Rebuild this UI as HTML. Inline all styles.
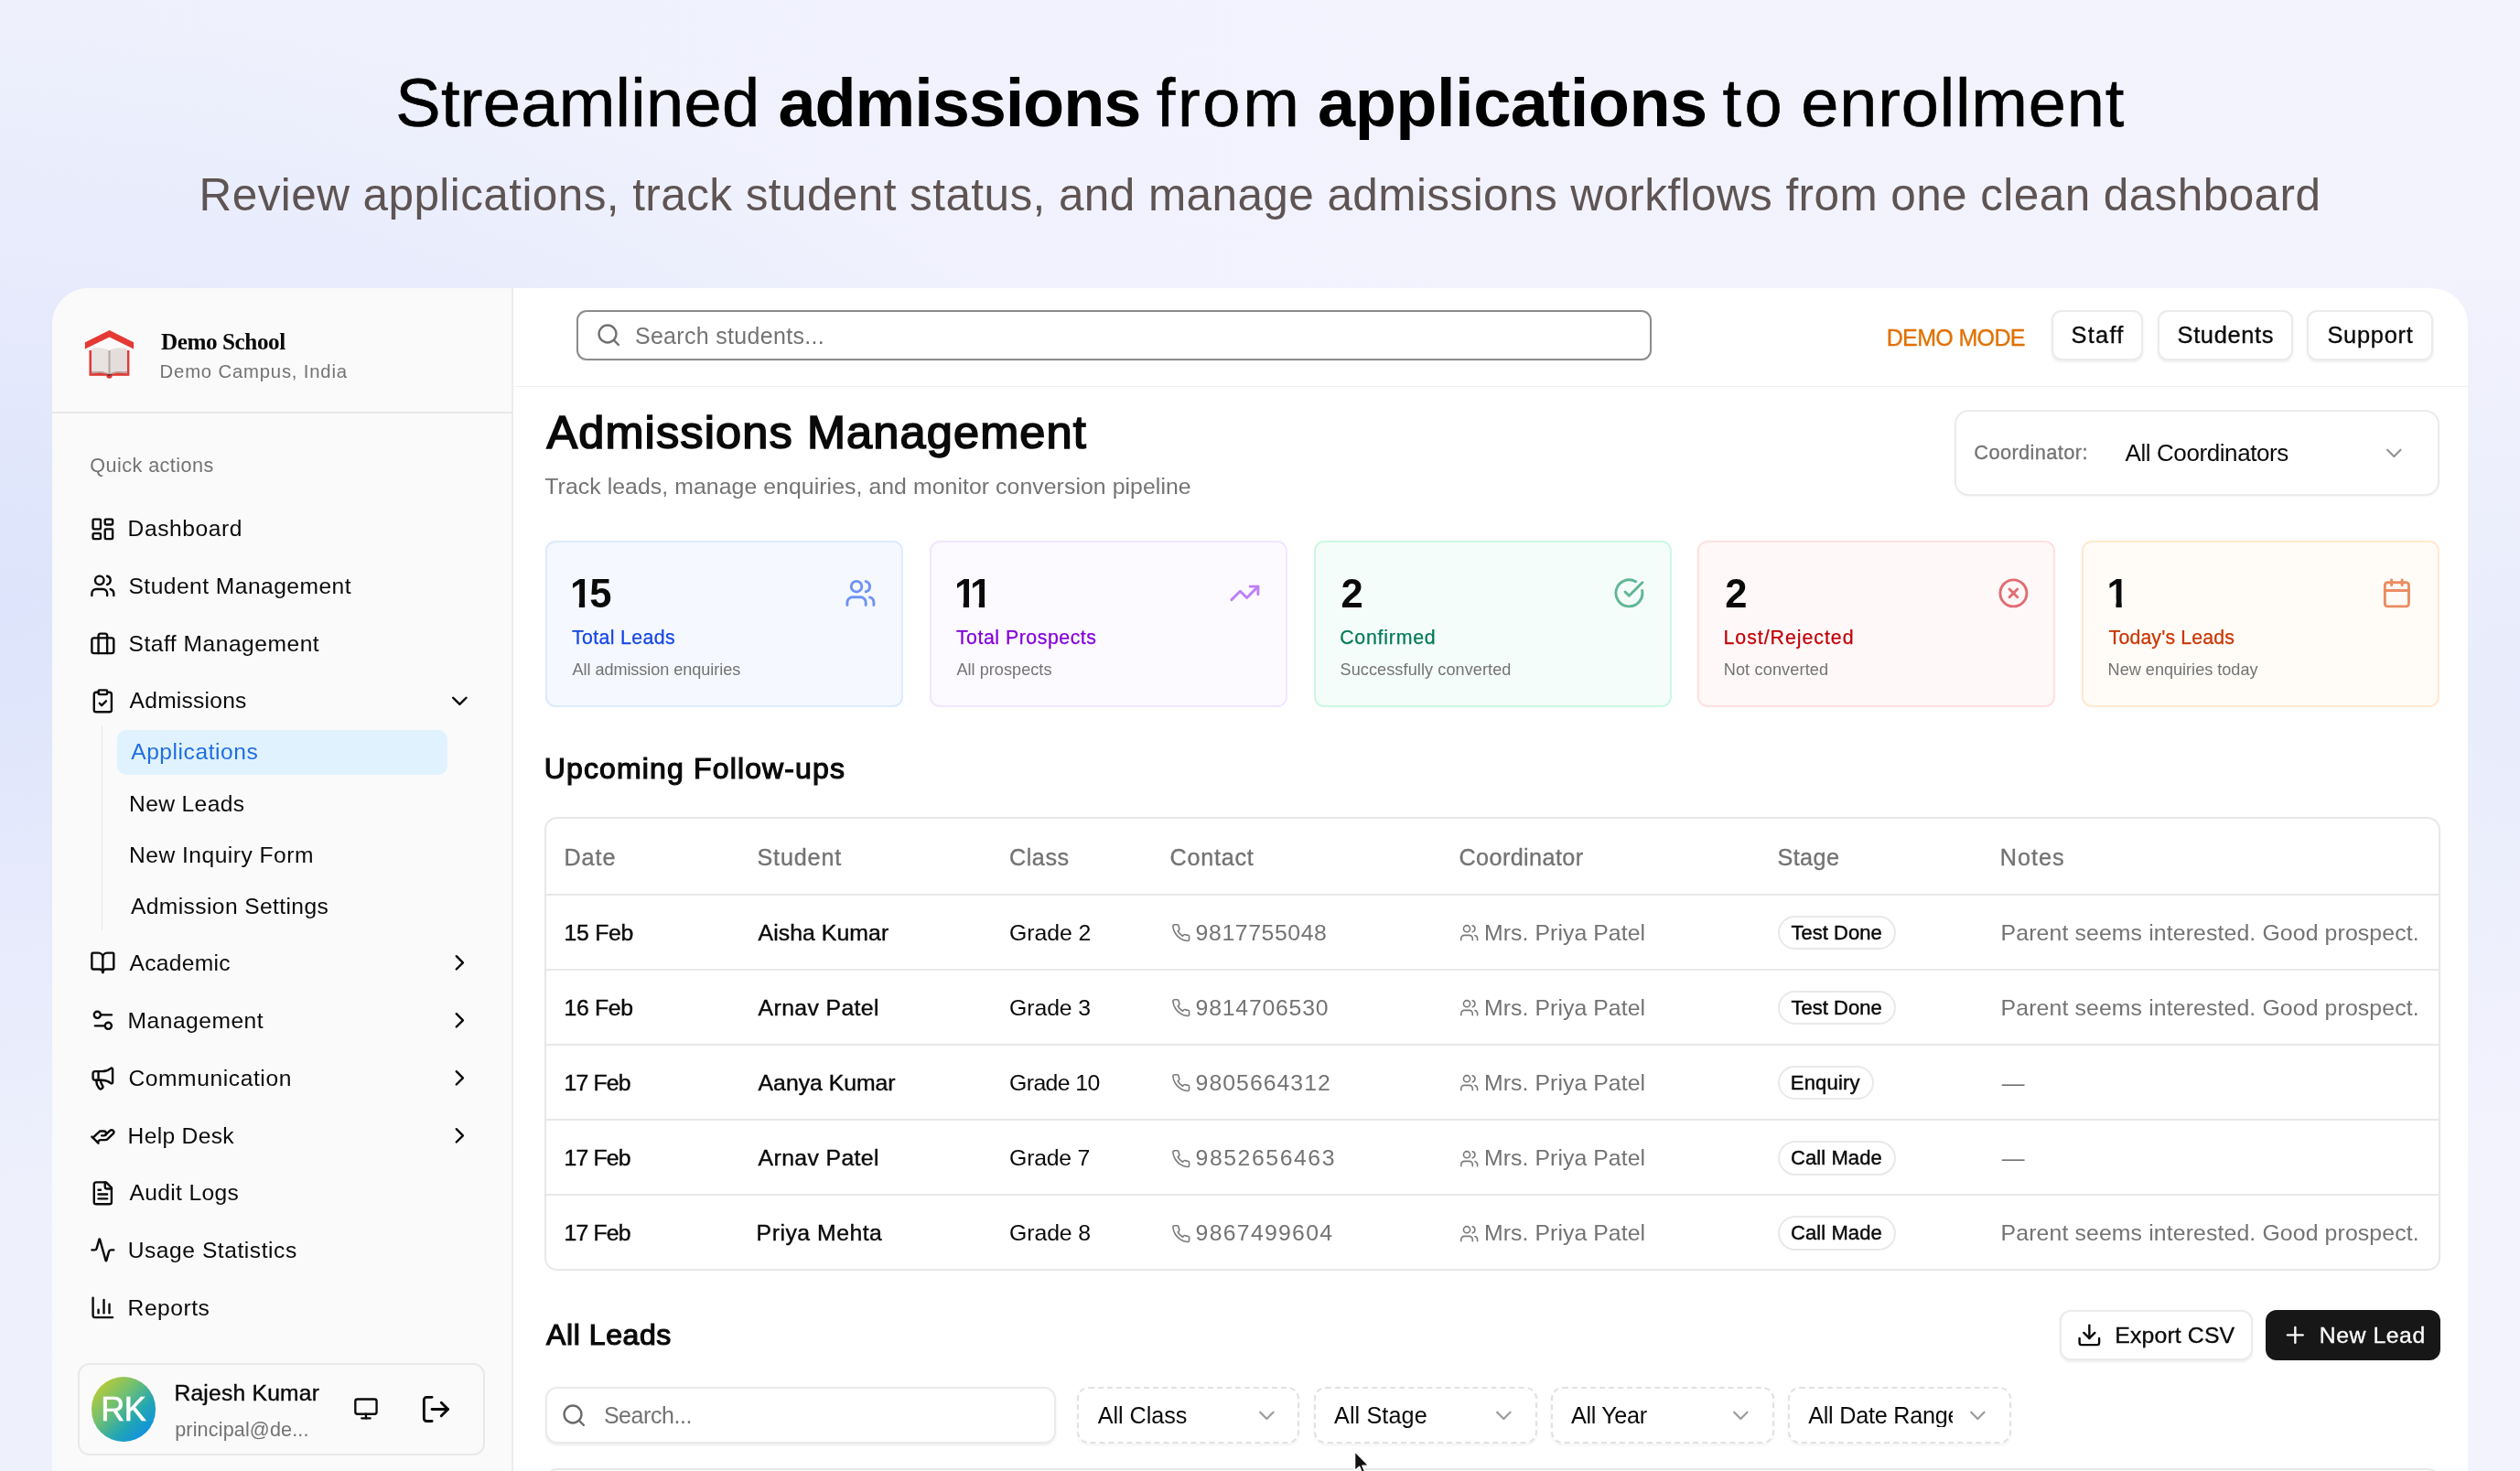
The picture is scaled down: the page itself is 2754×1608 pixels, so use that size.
<!DOCTYPE html>
<html lang="en"><head><meta charset="utf-8"><title>Admissions Management</title>
<style>
html,body{margin:0;padding:0}
body{width:2754px;height:1608px;overflow:hidden;position:relative;font-family:"Liberation Sans",sans-serif;color:#0a0a0a;
background:radial-gradient(ellipse 1300px 640px at 0 660px,rgba(221,228,251,1) 0%,rgba(221,228,251,0) 100%),radial-gradient(ellipse 500px 520px at 2754px 760px,rgba(231,235,251,.9) 0%,rgba(231,235,251,0) 100%),linear-gradient(90deg,#eef0fc 0%,#f1f2fd 45%,#f3f3fd 100%)}
.t{position:absolute;white-space:nowrap;line-height:1;margin:0;font-weight:400;font-style:normal}
.b{position:absolute;box-sizing:border-box}
.num{font-size:43.5px;font-weight:700}
.d1{display:inline-block;clip-path:polygon(0 0,.371em 0,.371em 1em,.226em 1em,.226em .62em,0 .62em)}
.i{position:absolute;fill:none;stroke-linecap:round;stroke-linejoin:round;overflow:visible}
h1,h2,h3,p{margin:0;font-weight:400}
#app{position:absolute;left:57px;top:314.6px;width:2639.5px;height:1400px;border-radius:40px 40px 0 0;background:#fff;overflow:hidden}
#side{position:absolute;left:0;top:0;width:502px;height:1400px;background:#fafafa;border-right:2px solid #ececec;box-sizing:content-box}
#root{position:absolute;left:0;top:0;width:2754px;height:1608px;will-change:transform}
</style></head><body><div id="root">
<header><h1>
<span class="t" style="left:432.3px;top:76.00px;font-size:74px;letter-spacing:0.30px;color:#000;-webkit-text-stroke:0.6px currentColor;">Streamlined</span>
<b class="t" style="left:850.5px;top:76.00px;font-size:74px;letter-spacing:-1.14px;font-weight:700;color:#000;">admissions</b>
<span class="t" style="left:1263.7px;top:76.00px;font-size:74px;letter-spacing:2.71px;color:#000;-webkit-text-stroke:0.6px currentColor;">from</span>
<b class="t" style="left:1440.0px;top:76.00px;font-size:74px;letter-spacing:-0.50px;font-weight:700;color:#000;">applications</b>
<span class="t" style="left:1882.4px;top:76.00px;font-size:74px;letter-spacing:3.51px;color:#000;-webkit-text-stroke:0.6px currentColor;">to</span>
<span class="t" style="left:1968.3px;top:76.00px;font-size:74px;letter-spacing:0.83px;color:#000;-webkit-text-stroke:0.6px currentColor;">enrollment</span>
</h1>
<p class="t" style="left:217.6px;top:188.00px;font-size:49.5px;letter-spacing:0.41px;color:#5e5453;">Review applications, track student status, and manage admissions workflows from one clean dashboard</p>
</header>
<div id="app"><div id="side"></div></div>
<div class="b" style="left:57.0px;top:449.6px;width:502.5px;height:2.0px;background:#e7e7e7"></div>
<div class="b" style="left:561.0px;top:421.8px;width:2135.5px;height:1.7px;background:#f0f0f0"></div>
<svg class="b" style="left:90px;top:358px" width="60" height="60" viewBox="90 358 60 60">
<path d="M92.9 374.2 L119.6 361 L146.1 374.2 L146.1 381.6 L119.6 368.6 L92.9 381.6 Z" fill="#e53935"/>
<rect x="97.5" y="383" width="43.9" height="27.8" fill="#e03a36"/>
<circle cx="119.5" cy="410.6" r="3.2" fill="#e03a36"/>
<ellipse cx="119.5" cy="409.3" rx="2.4" ry="1.3" fill="#3b1414"/>
<path d="M100 381.2 C106 379.6 114 380 119.2 383 L119.2 408.6 C113 405.6 106 405.6 100 406.4 Z" fill="#e8e2e0"/>
<path d="M139 381.2 C133 379.6 125 380 119.8 383 L119.8 408.6 C126 405.6 133 405.6 139 406.4 Z" fill="#e4dddb"/>
<path d="M100 406.4 C106 405.6 113 405.6 119.2 408.6 L119.2 409.6 C113 407.4 106 407.6 100 408.4 Z" fill="#b8a9a4"/>
<path d="M139 406.4 C133 405.6 126 405.6 119.8 408.6 L119.8 409.6 C126 407.4 133 407.6 139 408.4 Z" fill="#b8a9a4"/>
<rect x="118.4" y="383" width="2.2" height="26" fill="#b9a9a3"/>
</svg>
<span class="t" style="left:175.9px;top:361.00px;font-size:25.2px;letter-spacing:-0.43px;font-weight:700;font-family:'Liberation Serif', serif;">Demo School</span>
<span class="t" style="left:174.6px;top:396.00px;font-size:20.3px;letter-spacing:0.82px;color:#737373;">Demo Campus, India</span>
<nav>
<span class="t" style="left:98.2px;top:498.00px;font-size:21.6px;letter-spacing:0.46px;color:#737373;">Quick actions</span>
<svg class="i" style="left:98.0px;top:563.5px" width="28.7" height="28.7" viewBox="0 0 24 24" stroke="#0a0a0a" stroke-width="2"><rect x="3" y="3" width="7" height="9" rx="1"/><rect x="14" y="3" width="7" height="5" rx="1"/><rect x="14" y="12" width="7" height="9" rx="1"/><rect x="3" y="16" width="7" height="5" rx="1"/></svg>
<a class="t" style="left:139.6px;top:566.00px;font-size:24.6px;letter-spacing:0.57px;">Dashboard</a>
<svg class="i" style="left:98.0px;top:626.2px" width="28.7" height="28.7" viewBox="0 0 24 24" stroke="#0a0a0a" stroke-width="2"><path d="M16 21v-2a4 4 0 0 0-4-4H6a4 4 0 0 0-4 4v2"/><circle cx="9" cy="7" r="4"/><path d="M22 21v-2a4 4 0 0 0-3-3.87"/><path d="M16 3.13a4 4 0 0 1 0 7.75"/></svg>
<a class="t" style="left:140.5px;top:629.00px;font-size:24.6px;letter-spacing:0.46px;">Student Management</a>
<svg class="i" style="left:98.0px;top:689.1px" width="28.7" height="28.7" viewBox="0 0 24 24" stroke="#0a0a0a" stroke-width="2"><rect x="2" y="7" width="20" height="14" rx="2"/><path d="M16 21V5a2 2 0 0 0-2-2h-4a2 2 0 0 0-2 2v16"/></svg>
<a class="t" style="left:140.5px;top:692.00px;font-size:24.6px;letter-spacing:0.51px;">Staff Management</a>
<svg class="i" style="left:98.0px;top:751.9px" width="28.7" height="28.7" viewBox="0 0 24 24" stroke="#0a0a0a" stroke-width="2"><rect x="8" y="2" width="8" height="4" rx="1"/><path d="M16 4h2a2 2 0 0 1 2 2v14a2 2 0 0 1-2 2H6a2 2 0 0 1-2-2V6a2 2 0 0 1 2-2h2"/><path d="m9 14 2 2 4-4"/></svg>
<a class="t" style="left:141.6px;top:754.00px;font-size:24.6px;letter-spacing:0.23px;">Admissions</a>
<svg class="i" style="left:488.2px;top:751.9px" width="28.7" height="28.7" viewBox="0 0 24 24" stroke="#0a0a0a" stroke-width="2"><path d="m6 9 6 6 6-6"/></svg>
<div class="b" style="left:110.8px;top:794.0px;width:1.6px;height:223.0px;background:#e5e5e5"></div>
<div class="b" style="left:128.1px;top:797.8px;width:360.9px;height:48.8px;background:#e0f2fe;border-radius:10px"></div>
<a class="t" style="left:143.2px;top:810.00px;font-size:24.6px;letter-spacing:0.54px;color:#1f6ee0;">Applications</a>
<a class="t" style="left:141.0px;top:867.00px;font-size:24.6px;letter-spacing:0.38px;">New Leads</a>
<a class="t" style="left:141.0px;top:923.00px;font-size:24.6px;letter-spacing:0.49px;">New Inquiry Form</a>
<a class="t" style="left:143.0px;top:979.00px;font-size:24.6px;letter-spacing:0.39px;">Admission Settings</a>
<svg class="i" style="left:98.0px;top:1038.4px" width="28.7" height="28.7" viewBox="0 0 24 24" stroke="#0a0a0a" stroke-width="2"><path d="M12 7v14"/><path d="M3 18a1 1 0 0 1-1-1V4a1 1 0 0 1 1-1h5a4 4 0 0 1 4 4 4 4 0 0 1 4-4h5a1 1 0 0 1 1 1v13a1 1 0 0 1-1 1h-6a3 3 0 0 0-3 3 3 3 0 0 0-3-3z"/></svg>
<a class="t" style="left:141.6px;top:1041.00px;font-size:24.6px;letter-spacing:0.29px;">Academic</a>
<svg class="i" style="left:488.2px;top:1038.4px" width="28.7" height="28.7" viewBox="0 0 24 24" stroke="#0a0a0a" stroke-width="2"><path d="m9 18 6-6-6-6"/></svg>
<svg class="i" style="left:98.0px;top:1101.4px" width="28.7" height="28.7" viewBox="0 0 24 24" stroke="#0a0a0a" stroke-width="2"><path d="M20 7h-9"/><path d="M14 17H5"/><circle cx="17" cy="17" r="3"/><circle cx="7" cy="7" r="3"/></svg>
<a class="t" style="left:139.6px;top:1104.00px;font-size:24.6px;letter-spacing:0.49px;">Management</a>
<svg class="i" style="left:488.2px;top:1101.4px" width="28.7" height="28.7" viewBox="0 0 24 24" stroke="#0a0a0a" stroke-width="2"><path d="m9 18 6-6-6-6"/></svg>
<svg class="i" style="left:98.0px;top:1164.4px" width="28.7" height="28.7" viewBox="0 0 24 24" stroke="#0a0a0a" stroke-width="2"><path d="M11 6a13 13 0 0 0 8.4-2.8A1 1 0 0 1 21 4v12a1 1 0 0 1-1.6.8A13 13 0 0 0 11 14H5a2 2 0 0 1-2-2V8a2 2 0 0 1 2-2z"/><path d="M6 14a12 12 0 0 0 2.4 7.2 2 2 0 0 0 3.2-2.4A8 8 0 0 1 10 14"/><path d="M8 6v8"/></svg>
<a class="t" style="left:140.4px;top:1167.00px;font-size:24.6px;letter-spacing:0.59px;">Communication</a>
<svg class="i" style="left:488.2px;top:1164.4px" width="28.7" height="28.7" viewBox="0 0 24 24" stroke="#0a0a0a" stroke-width="2"><path d="m9 18 6-6-6-6"/></svg>
<svg class="i" style="left:98.0px;top:1227.1px" width="28.7" height="28.7" viewBox="0 0 24 24" stroke="#0a0a0a" stroke-width="2"><path d="M11 12h2a2 2 0 1 0 0-4h-3c-.6 0-1.1.2-1.4.6L3 14"/><path d="m7 18 1.6-1.4c.3-.4.8-.6 1.4-.6h4c1.1 0 2.1-.4 2.8-1.2l4.6-4.4a2 2 0 0 0-2.75-2.91l-4.2 3.9"/><path d="m2 13 6 6"/></svg>
<a class="t" style="left:139.6px;top:1230.00px;font-size:24.6px;letter-spacing:0.32px;">Help Desk</a>
<svg class="i" style="left:488.2px;top:1227.1px" width="28.7" height="28.7" viewBox="0 0 24 24" stroke="#0a0a0a" stroke-width="2"><path d="m9 18 6-6-6-6"/></svg>
<svg class="i" style="left:98.0px;top:1289.8px" width="28.7" height="28.7" viewBox="0 0 24 24" stroke="#0a0a0a" stroke-width="2"><path d="M15 2H6a2 2 0 0 0-2 2v16a2 2 0 0 0 2 2h12a2 2 0 0 0 2-2V7Z"/><path d="M14 2v4a2 2 0 0 0 2 2h4"/><path d="M10 9H8"/><path d="M16 13H8"/><path d="M16 17H8"/></svg>
<a class="t" style="left:141.6px;top:1292.00px;font-size:24.6px;letter-spacing:0.32px;">Audit Logs</a>
<svg class="i" style="left:98.0px;top:1352.4px" width="28.7" height="28.7" viewBox="0 0 24 24" stroke="#0a0a0a" stroke-width="2"><path d="M22 12h-2.48a2 2 0 0 0-1.93 1.46l-2.35 8.36a.25.25 0 0 1-.48 0L9.24 2.18a.25.25 0 0 0-.48 0l-2.35 8.36A2 2 0 0 1 4.49 12H2"/></svg>
<a class="t" style="left:139.7px;top:1355.00px;font-size:24.6px;letter-spacing:0.55px;">Usage Statistics</a>
<svg class="i" style="left:98.0px;top:1415.2px" width="28.7" height="28.7" viewBox="0 0 24 24" stroke="#0a0a0a" stroke-width="2"><path d="M3 3v16a2 2 0 0 0 2 2h16"/><path d="M18 17V9"/><path d="M13 17V5"/><path d="M8 17v-3"/></svg>
<a class="t" style="left:139.6px;top:1418.00px;font-size:24.6px;letter-spacing:0.53px;">Reports</a>
</nav>
<div class="b" style="left:85.3px;top:1489.6px;width:444.4px;height:101.4px;border:2px solid #e8e8e8;border-radius:13px;background:#fafafa"></div>
<div class="b" style="left:99.8px;top:1505.2px;width:70.5px;height:70.5px;border-radius:50%;background:linear-gradient(135deg,#c9cd2a 5%,#6fbf73 40%,#22a6b3 65%,#0a8af0 95%)"></div>
<span class="t" style="left:110.2px;top:1523.00px;font-size:36px;letter-spacing:-0.35px;color:#fff;-webkit-text-stroke:0.6px currentColor;">RK</span>
<span class="t" style="left:190.4px;top:1511.00px;font-size:24.6px;letter-spacing:0.25px;-webkit-text-stroke:0.4px currentColor;">Rajesh Kumar</span>
<span class="t" style="left:191.2px;top:1552.00px;font-size:21.6px;letter-spacing:0.14px;color:#737373;">principal@de...</span>
<svg class="i" style="left:385.6px;top:1526.2px" width="27.9" height="27.9" viewBox="0 0 24 24" stroke="#0a0a0a" stroke-width="2"><rect x="2" y="3" width="20" height="14" rx="2"/><path d="M8 21h8"/><path d="M12 17v4"/></svg>
<svg class="i" style="left:459.1px;top:1523.0px" width="34.9" height="34.9" viewBox="0 0 24 24" stroke="#0a0a0a" stroke-width="2"><path d="M9 21H5a2 2 0 0 1-2-2V5a2 2 0 0 1 2-2h4"/><path d="m16 17 5-5-5-5"/><path d="M21 12H9"/></svg>
<div class="b" style="left:630.4px;top:338.8px;width:1175.1px;height:55.4px;border:2px solid #8c8c8c;border-radius:11px;background:#fff;box-shadow:0 1px 2px rgba(0,0,0,.06)"></div>
<svg class="i" style="left:651.1px;top:352.4px" width="28.4" height="28.4" viewBox="0 0 24 24" stroke="#717171" stroke-width="2"><circle cx="11" cy="11" r="8"/><path d="m21 21-4.3-4.3"/></svg>
<span class="t" style="left:693.9px;top:355.00px;font-size:25px;letter-spacing:0.31px;color:#737373;">Search students...</span>
<span class="t" style="left:2061.7px;top:357.00px;font-size:25px;letter-spacing:-0.64px;color:#e17100;-webkit-text-stroke:0.3px currentColor;">DEMO MODE</span>
<div class="b" style="left:2242.3px;top:339.3px;width:100.0px;height:54.4px;border:2px solid #ebebeb;border-radius:11px;background:#fff;box-shadow:0 1.5px 3px rgba(0,0,0,.07)"></div>
<a class="t" style="left:2263.6px;top:354.00px;font-size:25.4px;letter-spacing:1.26px;-webkit-text-stroke:0.35px currentColor;">Staff</a>
<div class="b" style="left:2357.6px;top:339.3px;width:148.6px;height:54.4px;border:2px solid #ebebeb;border-radius:11px;background:#fff;box-shadow:0 1.5px 3px rgba(0,0,0,.07)"></div>
<a class="t" style="left:2379.5px;top:354.00px;font-size:25.4px;letter-spacing:0.69px;-webkit-text-stroke:0.35px currentColor;">Students</a>
<div class="b" style="left:2521.4px;top:339.3px;width:138.1px;height:54.4px;border:2px solid #ebebeb;border-radius:11px;background:#fff;box-shadow:0 1.5px 3px rgba(0,0,0,.07)"></div>
<a class="t" style="left:2543.4px;top:354.00px;font-size:25.4px;letter-spacing:0.75px;-webkit-text-stroke:0.35px currentColor;">Support</a>
<h2 class="t" style="left:597.4px;top:448.00px;font-size:50.5px;letter-spacing:1.12px;-webkit-text-stroke:1.7px currentColor;">Admissions Management</h2>
<p class="t" style="left:595.3px;top:520.00px;font-size:24.8px;letter-spacing:0.07px;color:#737373;">Track leads, manage enquiries, and monitor conversion pipeline</p>
<div class="b" style="left:2136.2px;top:447.9px;width:530.3px;height:93.9px;border:2px solid #ebebeb;border-radius:15.5px;background:#fff;box-shadow:0 1px 2px rgba(0,0,0,.04)"></div>
<span class="t" style="left:2157.3px;top:484.00px;font-size:21.8px;letter-spacing:0.39px;color:#737373;-webkit-text-stroke:0.3px currentColor;">Coordinator:</span>
<span class="t" style="left:2322.5px;top:482.00px;font-size:26px;letter-spacing:-0.41px;">All Coordinators</span>
<svg class="i" style="left:2601.8px;top:480.8px" width="28.7" height="28.7" viewBox="0 0 24 24" stroke="#949494" stroke-width="1.9"><path d="m6 9 6 6 6-6"/></svg>
<div class="b" style="left:595.7px;top:591.4px;width:391.0px;height:181.8px;border:2px solid #dceafe;border-radius:11px;background:#f5f8fe"></div>
<strong class="t num" style="left:623.0px;top:628.00px;letter-spacing:-3px"><span class="d1">1</span>5</strong>
<span class="t" style="left:625.0px;top:687.00px;font-size:21.3px;letter-spacing:0.36px;color:#1447e6;-webkit-text-stroke:0.25px currentColor;">Total Leads</span>
<span class="t" style="left:625.5px;top:723.00px;font-size:18.1px;letter-spacing:-0.06px;color:#737373;">All admission enquiries</span>
<svg class="i" style="left:922.8px;top:630.9px" width="34.8" height="34.8" viewBox="0 0 24 24" stroke="#6f93f4" stroke-width="2"><path d="M16 21v-2a4 4 0 0 0-4-4H6a4 4 0 0 0-4 4v2"/><circle cx="9" cy="7" r="4"/><path d="M22 21v-2a4 4 0 0 0-3-3.87"/><path d="M16 3.13a4 4 0 0 1 0 7.75"/></svg>
<div class="b" style="left:1015.6px;top:591.4px;width:391.0px;height:181.8px;border:2px solid #f2e6ff;border-radius:11px;background:#fcfaff"></div>
<strong class="t num" style="left:1042.9px;top:628.00px;letter-spacing:-7.1px"><span class="d1">1</span><span class="d1">1</span></strong>
<span class="t" style="left:1044.9px;top:687.00px;font-size:21.3px;letter-spacing:0.53px;color:#8200db;-webkit-text-stroke:0.25px currentColor;">Total Prospects</span>
<span class="t" style="left:1045.4px;top:723.00px;font-size:18.1px;letter-spacing:0.04px;color:#737373;">All prospects</span>
<svg class="i" style="left:1342.7px;top:630.9px" width="34.8" height="34.8" viewBox="0 0 24 24" stroke="#bd7ef8" stroke-width="2"><path d="M22 7 13.5 15.5 8.5 10.5 2 17"/><path d="M16 7h6v6"/></svg>
<div class="b" style="left:1435.5px;top:591.4px;width:391.0px;height:181.8px;border:2px solid #cdf8e3;border-radius:11px;background:#f5fdfa"></div>
<strong class="t num" style="left:1465.4px;top:628.00px;letter-spacing:0px">2</strong>
<span class="t" style="left:1464.2px;top:687.00px;font-size:21.3px;letter-spacing:0.78px;color:#007a55;-webkit-text-stroke:0.25px currentColor;">Confirmed</span>
<span class="t" style="left:1464.5px;top:723.00px;font-size:18.1px;letter-spacing:0.09px;color:#737373;">Successfully converted</span>
<svg class="i" style="left:1762.6px;top:630.9px" width="34.8" height="34.8" viewBox="0 0 24 24" stroke="#5fb796" stroke-width="2"><path d="M21.801 10A10 10 0 1 1 17 3.335"/><path d="m9 11 3 3L22 4"/></svg>
<div class="b" style="left:1855.4px;top:591.4px;width:391.0px;height:181.8px;border:2px solid #ffe0e0;border-radius:11px;background:#fff8f8"></div>
<strong class="t num" style="left:1885.3px;top:628.00px;letter-spacing:0px">2</strong>
<span class="t" style="left:1883.5px;top:687.00px;font-size:21.3px;letter-spacing:0.98px;color:#c10007;-webkit-text-stroke:0.25px currentColor;">Lost/Rejected</span>
<span class="t" style="left:1883.7px;top:723.00px;font-size:18.1px;letter-spacing:0.15px;color:#737373;">Not converted</span>
<svg class="i" style="left:2182.5px;top:630.9px" width="34.8" height="34.8" viewBox="0 0 24 24" stroke="#e16d73" stroke-width="2"><circle cx="12" cy="12" r="10"/><path d="m15 9-6 6"/><path d="m9 9 6 6"/></svg>
<div class="b" style="left:2275.3px;top:591.4px;width:391.0px;height:181.8px;border:2px solid #ffe9cf;border-radius:11px;background:#fffcf7"></div>
<strong class="t num" style="left:2302.6px;top:628.00px;letter-spacing:0px"><span class="d1">1</span></strong>
<span class="t" style="left:2304.6px;top:687.00px;font-size:21.3px;letter-spacing:0.15px;color:#ca3500;-webkit-text-stroke:0.25px currentColor;">Today's Leads</span>
<span class="t" style="left:2303.6px;top:723.00px;font-size:18.1px;color:#737373;">New enquiries today</span>
<svg class="i" style="left:2602.4px;top:630.9px" width="34.8" height="34.8" viewBox="0 0 24 24" stroke="#ea8c61" stroke-width="2"><path d="M8 2v4"/><path d="M16 2v4"/><rect x="3" y="4" width="18" height="18" rx="2"/><path d="M3 10h18"/></svg>
<h3 class="t" style="left:594.8px;top:824.00px;font-size:32px;letter-spacing:1.14px;-webkit-text-stroke:1.2px currentColor;">Upcoming Follow-ups</h3>
<div class="b" style="left:595.4px;top:892.6px;width:2072.0px;height:496.8px;border:2px solid #e8e8e8;border-radius:14px;background:#fff"></div>
<div class="b" style="left:597.0px;top:977.0px;width:2069.0px;height:2.0px;background:#e8e8e8"></div>
<div class="b" style="left:597.0px;top:1059.0px;width:2069.0px;height:2.0px;background:#e8e8e8"></div>
<div class="b" style="left:597.0px;top:1141.0px;width:2069.0px;height:2.0px;background:#e8e8e8"></div>
<div class="b" style="left:597.0px;top:1223.0px;width:2069.0px;height:2.0px;background:#e8e8e8"></div>
<div class="b" style="left:597.0px;top:1305.0px;width:2069.0px;height:2.0px;background:#e8e8e8"></div>
<span class="t" style="left:616.4px;top:925.00px;font-size:25.2px;letter-spacing:0.99px;color:#737373;-webkit-text-stroke:0.35px currentColor;">Date</span>
<span class="t" style="left:827.5px;top:925.00px;font-size:25.2px;letter-spacing:0.82px;color:#737373;-webkit-text-stroke:0.35px currentColor;">Student</span>
<span class="t" style="left:1103.0px;top:925.00px;font-size:25.2px;letter-spacing:0.53px;color:#737373;-webkit-text-stroke:0.35px currentColor;">Class</span>
<span class="t" style="left:1278.6px;top:925.00px;font-size:25.2px;letter-spacing:0.74px;color:#737373;-webkit-text-stroke:0.35px currentColor;">Contact</span>
<span class="t" style="left:1594.5px;top:925.00px;font-size:25.2px;letter-spacing:0.40px;color:#737373;-webkit-text-stroke:0.35px currentColor;">Coordinator</span>
<span class="t" style="left:1942.4px;top:925.00px;font-size:25.2px;letter-spacing:0.44px;color:#737373;-webkit-text-stroke:0.35px currentColor;">Stage</span>
<span class="t" style="left:2185.7px;top:925.00px;font-size:25.2px;letter-spacing:1.00px;color:#737373;-webkit-text-stroke:0.35px currentColor;">Notes</span>
<span class="t" style="left:616.6px;top:1008.00px;font-size:24.8px;letter-spacing:-0.31px;-webkit-text-stroke:0.4px currentColor;">15 Feb</span>
<span class="t" style="left:828.6px;top:1008.00px;font-size:24.8px;letter-spacing:0.06px;-webkit-text-stroke:0.4px currentColor;">Aisha Kumar</span>
<span class="t" style="left:1103.1px;top:1008.00px;font-size:24.8px;letter-spacing:-0.07px;">Grade 2</span>
<svg class="i" style="left:1279.6px;top:1009.3px" width="21.4" height="21.4" viewBox="0 0 24 24" stroke="#7a7a7a" stroke-width="1.8"><path d="M22 16.92v3a2 2 0 0 1-2.18 2 19.79 19.79 0 0 1-8.63-3.07 19.5 19.5 0 0 1-6-6 19.79 19.79 0 0 1-3.07-8.67A2 2 0 0 1 4.11 2h3a2 2 0 0 1 2 1.72 12.84 12.84 0 0 0 .7 2.81 2 2 0 0 1-.45 2.11L8.09 9.91a16 16 0 0 0 6 6l1.27-1.27a2 2 0 0 1 2.11-.45 12.84 12.84 0 0 0 2.81.7A2 2 0 0 1 22 16.92z"/></svg>
<span class="t" style="left:1306.6px;top:1008.00px;font-size:24.8px;letter-spacing:0.60px;color:#737373;">9817755048</span>
<svg class="i" style="left:1595.1px;top:1009.3px" width="21.4" height="21.4" viewBox="0 0 24 24" stroke="#7a7a7a" stroke-width="1.8"><path d="M16 21v-2a4 4 0 0 0-4-4H6a4 4 0 0 0-4 4v2"/><circle cx="9" cy="7" r="4"/><path d="M22 21v-2a4 4 0 0 0-3-3.87"/><path d="M16 3.13a4 4 0 0 1 0 7.75"/></svg>
<span class="t" style="left:1622.0px;top:1008.00px;font-size:24.8px;letter-spacing:0.07px;color:#737373;">Mrs. Priya Patel</span>
<div class="b" style="left:1942.8px;top:1000.7px;width:128.9px;height:37.7px;border:2px solid #e9e9e9;border-radius:19px;background:#fff"></div>
<span class="t" style="left:1957.6px;top:1009.00px;font-size:22px;-webkit-text-stroke:0.45px currentColor;">Test Done</span>
<span class="t" style="left:2186.6px;top:1008.00px;font-size:24.8px;letter-spacing:0.13px;color:#737373;">Parent seems interested. Good prospect.</span>
<span class="t" style="left:616.6px;top:1090.00px;font-size:24.8px;letter-spacing:-0.35px;-webkit-text-stroke:0.4px currentColor;">16 Feb</span>
<span class="t" style="left:828.6px;top:1090.00px;font-size:24.8px;letter-spacing:0.37px;-webkit-text-stroke:0.4px currentColor;">Arnav Patel</span>
<span class="t" style="left:1103.1px;top:1090.00px;font-size:24.8px;letter-spacing:-0.09px;">Grade 3</span>
<svg class="i" style="left:1279.6px;top:1091.3px" width="21.4" height="21.4" viewBox="0 0 24 24" stroke="#7a7a7a" stroke-width="1.8"><path d="M22 16.92v3a2 2 0 0 1-2.18 2 19.79 19.79 0 0 1-8.63-3.07 19.5 19.5 0 0 1-6-6 19.79 19.79 0 0 1-3.07-8.67A2 2 0 0 1 4.11 2h3a2 2 0 0 1 2 1.72 12.84 12.84 0 0 0 .7 2.81 2 2 0 0 1-.45 2.11L8.09 9.91a16 16 0 0 0 6 6l1.27-1.27a2 2 0 0 1 2.11-.45 12.84 12.84 0 0 0 2.81.7A2 2 0 0 1 22 16.92z"/></svg>
<span class="t" style="left:1306.6px;top:1090.00px;font-size:24.8px;letter-spacing:0.78px;color:#737373;">9814706530</span>
<svg class="i" style="left:1595.1px;top:1091.3px" width="21.4" height="21.4" viewBox="0 0 24 24" stroke="#7a7a7a" stroke-width="1.8"><path d="M16 21v-2a4 4 0 0 0-4-4H6a4 4 0 0 0-4 4v2"/><circle cx="9" cy="7" r="4"/><path d="M22 21v-2a4 4 0 0 0-3-3.87"/><path d="M16 3.13a4 4 0 0 1 0 7.75"/></svg>
<span class="t" style="left:1622.0px;top:1090.00px;font-size:24.8px;letter-spacing:0.07px;color:#737373;">Mrs. Priya Patel</span>
<div class="b" style="left:1942.8px;top:1082.8px;width:128.9px;height:37.7px;border:2px solid #e9e9e9;border-radius:19px;background:#fff"></div>
<span class="t" style="left:1957.6px;top:1091.00px;font-size:22px;-webkit-text-stroke:0.45px currentColor;">Test Done</span>
<span class="t" style="left:2186.6px;top:1090.00px;font-size:24.8px;letter-spacing:0.13px;color:#737373;">Parent seems interested. Good prospect.</span>
<span class="t" style="left:616.6px;top:1172.00px;font-size:24.8px;letter-spacing:-0.85px;-webkit-text-stroke:0.4px currentColor;">17 Feb</span>
<span class="t" style="left:828.6px;top:1172.00px;font-size:24.8px;letter-spacing:-0.02px;-webkit-text-stroke:0.4px currentColor;">Aanya Kumar</span>
<span class="t" style="left:1103.1px;top:1172.00px;font-size:24.8px;letter-spacing:-0.61px;">Grade 10</span>
<svg class="i" style="left:1279.6px;top:1173.4px" width="21.4" height="21.4" viewBox="0 0 24 24" stroke="#7a7a7a" stroke-width="1.8"><path d="M22 16.92v3a2 2 0 0 1-2.18 2 19.79 19.79 0 0 1-8.63-3.07 19.5 19.5 0 0 1-6-6 19.79 19.79 0 0 1-3.07-8.67A2 2 0 0 1 4.11 2h3a2 2 0 0 1 2 1.72 12.84 12.84 0 0 0 .7 2.81 2 2 0 0 1-.45 2.11L8.09 9.91a16 16 0 0 0 6 6l1.27-1.27a2 2 0 0 1 2.11-.45 12.84 12.84 0 0 0 2.81.7A2 2 0 0 1 22 16.92z"/></svg>
<span class="t" style="left:1306.6px;top:1172.00px;font-size:24.8px;letter-spacing:1.03px;color:#737373;">9805664312</span>
<svg class="i" style="left:1595.1px;top:1173.4px" width="21.4" height="21.4" viewBox="0 0 24 24" stroke="#7a7a7a" stroke-width="1.8"><path d="M16 21v-2a4 4 0 0 0-4-4H6a4 4 0 0 0-4 4v2"/><circle cx="9" cy="7" r="4"/><path d="M22 21v-2a4 4 0 0 0-3-3.87"/><path d="M16 3.13a4 4 0 0 1 0 7.75"/></svg>
<span class="t" style="left:1622.0px;top:1172.00px;font-size:24.8px;letter-spacing:0.07px;color:#737373;">Mrs. Priya Patel</span>
<div class="b" style="left:1942.8px;top:1164.8px;width:104.8px;height:37.7px;border:2px solid #e9e9e9;border-radius:19px;background:#fff"></div>
<span class="t" style="left:1956.8px;top:1173.00px;font-size:22px;letter-spacing:0.19px;-webkit-text-stroke:0.45px currentColor;">Enquiry</span>
<span class="t" style="left:2187.8px;top:1172.00px;font-size:24.8px;color:#737373;">—</span>
<span class="t" style="left:616.6px;top:1254.00px;font-size:24.8px;letter-spacing:-0.85px;-webkit-text-stroke:0.4px currentColor;">17 Feb</span>
<span class="t" style="left:828.6px;top:1254.00px;font-size:24.8px;letter-spacing:0.37px;-webkit-text-stroke:0.4px currentColor;">Arnav Patel</span>
<span class="t" style="left:1103.1px;top:1254.00px;font-size:24.8px;letter-spacing:-0.23px;">Grade 7</span>
<svg class="i" style="left:1279.6px;top:1255.5px" width="21.4" height="21.4" viewBox="0 0 24 24" stroke="#7a7a7a" stroke-width="1.8"><path d="M22 16.92v3a2 2 0 0 1-2.18 2 19.79 19.79 0 0 1-8.63-3.07 19.5 19.5 0 0 1-6-6 19.79 19.79 0 0 1-3.07-8.67A2 2 0 0 1 4.11 2h3a2 2 0 0 1 2 1.72 12.84 12.84 0 0 0 .7 2.81 2 2 0 0 1-.45 2.11L8.09 9.91a16 16 0 0 0 6 6l1.27-1.27a2 2 0 0 1 2.11-.45 12.84 12.84 0 0 0 2.81.7A2 2 0 0 1 22 16.92z"/></svg>
<span class="t" style="left:1306.6px;top:1254.00px;font-size:24.8px;letter-spacing:1.55px;color:#737373;">9852656463</span>
<svg class="i" style="left:1595.1px;top:1255.5px" width="21.4" height="21.4" viewBox="0 0 24 24" stroke="#7a7a7a" stroke-width="1.8"><path d="M16 21v-2a4 4 0 0 0-4-4H6a4 4 0 0 0-4 4v2"/><circle cx="9" cy="7" r="4"/><path d="M22 21v-2a4 4 0 0 0-3-3.87"/><path d="M16 3.13a4 4 0 0 1 0 7.75"/></svg>
<span class="t" style="left:1622.0px;top:1254.00px;font-size:24.8px;letter-spacing:0.07px;color:#737373;">Mrs. Priya Patel</span>
<div class="b" style="left:1942.8px;top:1246.9px;width:128.9px;height:37.7px;border:2px solid #e9e9e9;border-radius:19px;background:#fff"></div>
<span class="t" style="left:1957.0px;top:1255.00px;font-size:22px;letter-spacing:0.08px;-webkit-text-stroke:0.45px currentColor;">Call Made</span>
<span class="t" style="left:2187.8px;top:1254.00px;font-size:24.8px;color:#737373;">—</span>
<span class="t" style="left:616.6px;top:1336.00px;font-size:24.8px;letter-spacing:-0.85px;-webkit-text-stroke:0.4px currentColor;">17 Feb</span>
<span class="t" style="left:826.6px;top:1336.00px;font-size:24.8px;letter-spacing:0.50px;-webkit-text-stroke:0.4px currentColor;">Priya Mehta</span>
<span class="t" style="left:1103.1px;top:1336.00px;font-size:24.8px;letter-spacing:-0.10px;">Grade 8</span>
<svg class="i" style="left:1279.6px;top:1337.5px" width="21.4" height="21.4" viewBox="0 0 24 24" stroke="#7a7a7a" stroke-width="1.8"><path d="M22 16.92v3a2 2 0 0 1-2.18 2 19.79 19.79 0 0 1-8.63-3.07 19.5 19.5 0 0 1-6-6 19.79 19.79 0 0 1-3.07-8.67A2 2 0 0 1 4.11 2h3a2 2 0 0 1 2 1.72 12.84 12.84 0 0 0 .7 2.81 2 2 0 0 1-.45 2.11L8.09 9.91a16 16 0 0 0 6 6l1.27-1.27a2 2 0 0 1 2.11-.45 12.84 12.84 0 0 0 2.81.7A2 2 0 0 1 22 16.92z"/></svg>
<span class="t" style="left:1306.6px;top:1336.00px;font-size:24.8px;letter-spacing:1.28px;color:#737373;">9867499604</span>
<svg class="i" style="left:1595.1px;top:1337.5px" width="21.4" height="21.4" viewBox="0 0 24 24" stroke="#7a7a7a" stroke-width="1.8"><path d="M16 21v-2a4 4 0 0 0-4-4H6a4 4 0 0 0-4 4v2"/><circle cx="9" cy="7" r="4"/><path d="M22 21v-2a4 4 0 0 0-3-3.87"/><path d="M16 3.13a4 4 0 0 1 0 7.75"/></svg>
<span class="t" style="left:1622.0px;top:1336.00px;font-size:24.8px;letter-spacing:0.07px;color:#737373;">Mrs. Priya Patel</span>
<div class="b" style="left:1942.8px;top:1328.9px;width:128.9px;height:37.7px;border:2px solid #e9e9e9;border-radius:19px;background:#fff"></div>
<span class="t" style="left:1957.0px;top:1337.00px;font-size:22px;letter-spacing:0.08px;-webkit-text-stroke:0.45px currentColor;">Call Made</span>
<span class="t" style="left:2186.6px;top:1336.00px;font-size:24.8px;letter-spacing:0.13px;color:#737373;">Parent seems interested. Good prospect.</span>
<h3 class="t" style="left:597.1px;top:1443.00px;font-size:32px;letter-spacing:0.57px;-webkit-text-stroke:1.2px currentColor;">All Leads</h3>
<div class="b" style="left:2251.3px;top:1431.9px;width:210.5px;height:54.7px;border:2px solid #ebebeb;border-radius:12px;background:#fff;box-shadow:0 1.5px 3px rgba(0,0,0,.07)"></div>
<svg class="i" style="left:2268.8px;top:1445.0px" width="28.7" height="28.7" viewBox="0 0 24 24" stroke="#0a0a0a" stroke-width="2"><path d="M21 15v4a2 2 0 0 1-2 2H5a2 2 0 0 1-2-2v-4"/><path d="m7 10 5 5 5-5"/><path d="M12 15V3"/></svg>
<span class="t" style="left:2311.3px;top:1448.00px;font-size:24.8px;letter-spacing:0.14px;-webkit-text-stroke:0.35px currentColor;">Export CSV</span>
<div class="b" style="left:2476.1px;top:1431.5px;width:191.2px;height:55.4px;border-radius:12px;background:#171717"></div>
<svg class="i" style="left:2493.5px;top:1445.0px" width="28.7" height="28.7" viewBox="0 0 24 24" stroke="#fafafa" stroke-width="2"><path d="M5 12h14"/><path d="M12 5v14"/></svg>
<span class="t" style="left:2534.8px;top:1448.00px;font-size:24.8px;letter-spacing:0.54px;color:#fafafa;-webkit-text-stroke:0.35px currentColor;">New Lead</span>
<div class="b" style="left:596.3px;top:1516.0px;width:558.1px;height:61.6px;border:2px solid #ebebeb;border-radius:13px;background:#fff;box-shadow:0 1.5px 3px rgba(0,0,0,.07)"></div>
<svg class="i" style="left:612.9px;top:1532.5px" width="28.4" height="28.4" viewBox="0 0 24 24" stroke="#6b6b6b" stroke-width="2"><circle cx="11" cy="11" r="8"/><path d="m21 21-4.3-4.3"/></svg>
<span class="t" style="left:659.9px;top:1535.00px;font-size:25px;letter-spacing:-0.45px;color:#737373;">Search...</span>
<div class="b" style="left:1176.7px;top:1515.8px;width:243.6px;height:61.8px;border:2px dashed #e2e2e2;border-radius:13px;background:#fff;box-shadow:0 1.5px 3px rgba(0,0,0,.05)"></div>
<span class="t" style="left:1199.8px;top:1535.00px;font-size:25.2px;letter-spacing:-0.06px;">All Class</span>
<svg class="i" style="left:1370.1px;top:1532.6px" width="28.7" height="28.7" viewBox="0 0 24 24" stroke="#9c9c9c" stroke-width="1.9"><path d="m6 9 6 6 6-6"/></svg>
<div class="b" style="left:1436.0px;top:1515.8px;width:243.6px;height:61.8px;border:2px dashed #e2e2e2;border-radius:13px;background:#fff;box-shadow:0 1.5px 3px rgba(0,0,0,.05)"></div>
<span class="t" style="left:1458.0px;top:1535.00px;font-size:25.2px;letter-spacing:0.11px;">All Stage</span>
<svg class="i" style="left:1629.4px;top:1532.6px" width="28.7" height="28.7" viewBox="0 0 24 24" stroke="#9c9c9c" stroke-width="1.9"><path d="m6 9 6 6 6-6"/></svg>
<div class="b" style="left:1695.0px;top:1515.8px;width:243.6px;height:61.8px;border:2px dashed #e2e2e2;border-radius:13px;background:#fff;box-shadow:0 1.5px 3px rgba(0,0,0,.05)"></div>
<span class="t" style="left:1717.0px;top:1535.00px;font-size:25.2px;letter-spacing:-0.34px;">All Year</span>
<svg class="i" style="left:1888.4px;top:1532.6px" width="28.7" height="28.7" viewBox="0 0 24 24" stroke="#9c9c9c" stroke-width="1.9"><path d="m6 9 6 6 6-6"/></svg>
<div class="b" style="left:1954.0px;top:1515.8px;width:243.6px;height:61.8px;border:2px dashed #e2e2e2;border-radius:13px;background:#fff;box-shadow:0 1.5px 3px rgba(0,0,0,.05)"></div>
<span class="t" style="left:1976.2px;top:1535.00px;font-size:25.2px;letter-spacing:-0.23px;overflow:hidden;width:158.2px;">All Date Range</span>
<svg class="i" style="left:2147.3px;top:1532.6px" width="28.7" height="28.7" viewBox="0 0 24 24" stroke="#9c9c9c" stroke-width="1.9"><path d="m6 9 6 6 6-6"/></svg>
<div class="b" style="left:595.4px;top:1604.6px;width:2072.0px;height:95.4px;border:2px solid #e8e8e8;border-radius:14px;background:#fff"></div>
<svg class="b" style="left:1477.2px;top:1583.8px" width="24" height="30" viewBox="0 0 24 30"><path d="M3.5 2.5 L3.5 24 L8.6 19.4 L12 27.5 L15.4 26 L12 18.2 L19 18.2 Z" fill="#111" stroke="#fff" stroke-width="1.6" stroke-linejoin="round"/></svg>
</div></body></html>
